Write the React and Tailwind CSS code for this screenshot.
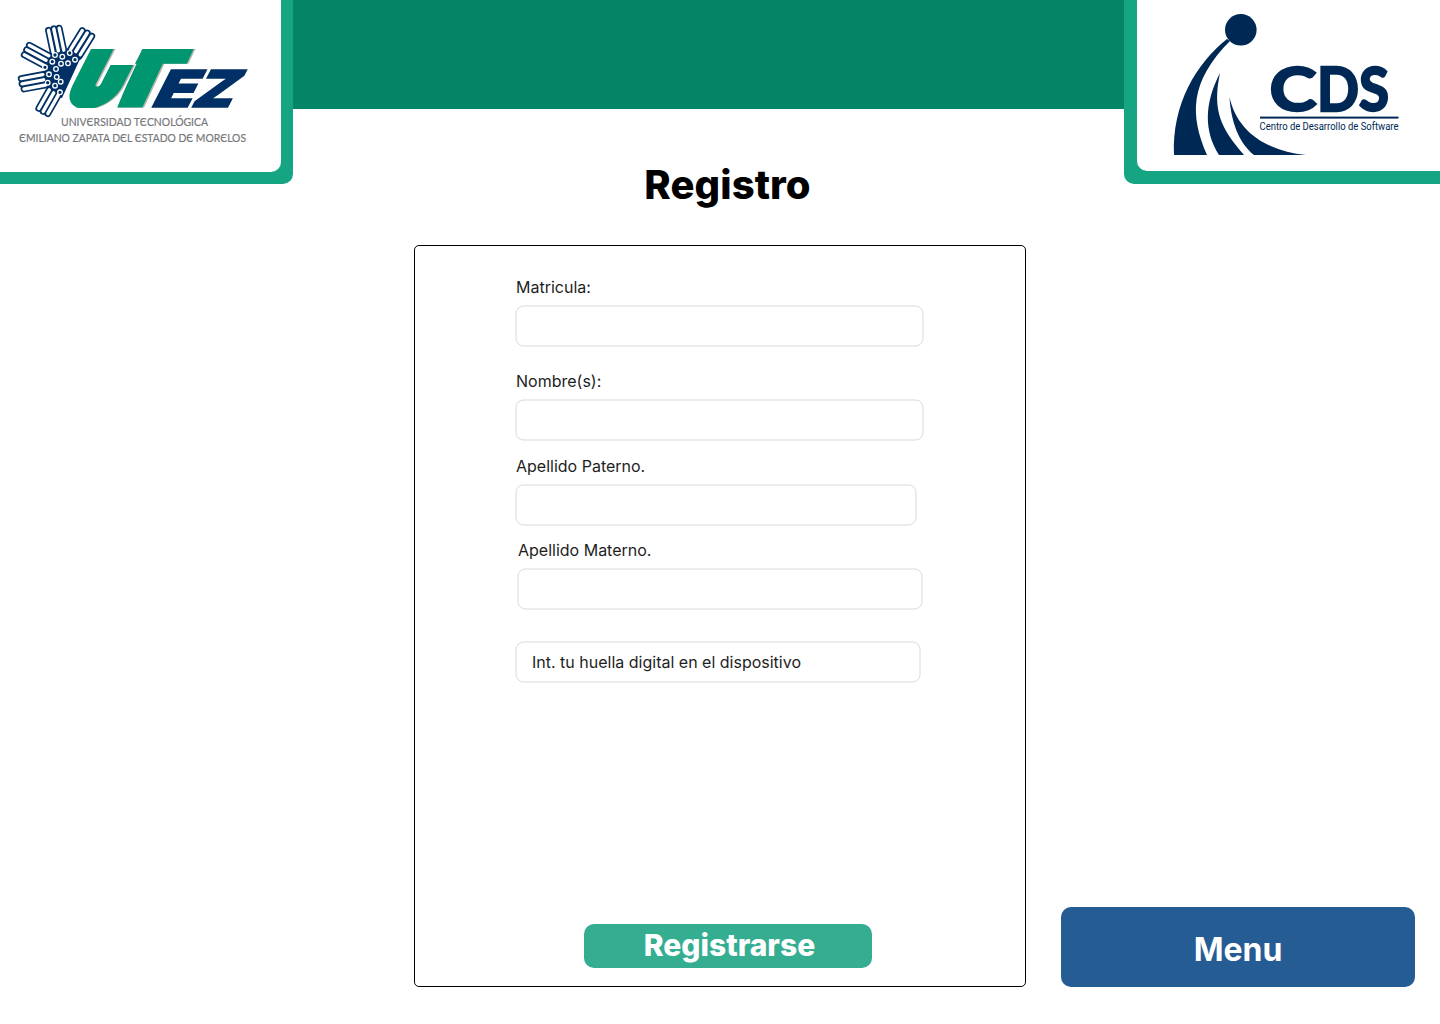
const hands = [
  { dx: 4.6, dy: 22, tips: [[48.5, 30.3], [53.8, 28.8], [59.2, 28.2]] },
  { dx: -11.5, dy: 18.5, tips: [[82.3, 30.6], [87.2, 33], [91.8, 36.2]] },
  { dx: 19.5, dy: 10.5, tips: [[29.3, 45.2], [26.6, 49.8], [24.2, 54.8]] },
  { dx: 21.5, dy: -4, tips: [[21.2, 78.6], [22, 83.8], [24, 89]] },
  { dx: 10.5, dy: -18.5, tips: [[38.8, 108.4], [43.2, 111.4], [47.8, 113.6]] },
];

const knuckles = [
  [55, 55], [62.3, 56.7], [69.7, 53], [75, 59.7], [68, 63.3], [61, 63.7], [52.3, 61.7], [45, 67.3],
  [56, 69], [49, 74.3], [56.7, 77], [47.7, 82.7], [55, 85.7], [60.7, 81.7], [60, 92.3],
];

function SlantedLetter({ ch, x, w, y, size, fill, dx = 0, stroke = 0, slant = -25 }) {
  return (
    <text
      transform={`translate(${x + dx} ${y}) skewX(${slant})`}
      fontFamily="Inter, sans-serif"
      fontWeight="900"
      fontSize={size}
      textLength={w}
      lengthAdjust="spacingAndGlyphs"
      fill={fill}
      stroke={fill}
      strokeWidth={stroke}
      strokeLinejoin="miter"
    >
      {ch}
    </text>
  );
}

function GreenLetters({ fill, dx }) {
  return (
    <>
      <g clipPath="url(#u-shape)">
        <SlantedLetter ch="U" x={65.5} w={46.5} y={102.5} size={68} fill={fill} dx={dx} stroke={10.5} slant={-27} />
      </g>
      <g clipPath="url(#t-shape)">
        <SlantedLetter ch="T" x={92} w={76} y={106} size={77} fill={fill} dx={dx} stroke={3} />
      </g>
    </>
  );
}

function UtezLogo() {
  return (
    <svg width="281" height="172" viewBox="0 0 281 172" role="img" aria-label="UTEZ">
      <defs>
        <clipPath id="u-shape"><path d="M50 49H116.5L108.5 65H150V108H50Z" /></clipPath>
        <clipPath id="t-shape"><path d="M142.5 49H200V108H117L134.5 65Z" /></clipPath>
      </defs>
      <path d="M52 54L68 54L75 56L86 46L62 98L57 97L53 92L50 85L44 82L46 74L44 66Z" fill="#003065" />
      {hands.map(({ dx, dy, tips }, h) => (
        <g key={h} strokeLinecap="round">
          {tips.map(([x, y], i) => (
            <line key={i} x1={x} y1={y} x2={x + dx * 1.1} y2={y + dy * 1.1} stroke="#003065" strokeWidth="6.8" />
          ))}
          {tips.map(([x, y], i) => (
            <line key={i} x1={x} y1={y} x2={x + dx} y2={y + dy} stroke="#fff" strokeWidth="3.4" />
          ))}
        </g>
      ))}
      {knuckles.map(([x, y], i) => (
        <circle key={i} cx={x} cy={y} r="2.3" fill="#003065" stroke="#fff" strokeWidth="1.3" />
      ))}
      <GreenLetters fill="#b9b5ad" dx={1.8} />
      <GreenLetters fill="#00966F" dx={0} />
      <SlantedLetter ch="E" x={149.5} w={40.5} y={107} size={51} fill="#003065" slant={-27} stroke={1.5} />
      <SlantedLetter ch="Z" x={189.5} w={41} y={107} size={51} fill="#003065" slant={-27} stroke={1.5} />
      <g fontFamily="Lato, sans-serif" fontSize="12" fill="#77787b" stroke="#77787b" strokeWidth="0.2">
        <text x="61" y="126" textLength="147" lengthAdjust="spacingAndGlyphs">UNIVЄRSIDAD TЄCNOLÓGICA</text>
        <text x="19" y="142" textLength="227" lengthAdjust="spacingAndGlyphs">ЄMILIANO ZAPATA DЄL ЄSTADO DЄ MORЄLOS</text>
      </g>
    </svg>
  );
}

function CdsLogo() {
  return (
    <svg width="303" height="171" viewBox="1137 0 303 171" fill="#002855" role="img" aria-label="CDS">
      <circle cx="1240.8" cy="29.8" r="15.8" />
      <path d="M1227 39C1196 64 1172 104 1174 155H1207C1190 116 1189 82 1230 41Z" />
      <path d="M1220 73C1204 104 1204 131 1219 155H1244C1221 128 1212 111 1220 73Z" />
      <path d="M1229.5 97C1231 122 1239 143 1254 155H1306C1267 151 1237 132 1229.5 97Z" />
      <g fontFamily="Lato, sans-serif" fontWeight="700" fontSize="61" stroke="#002855" strokeWidth="2.4">
        <text x="1269.5" y="111.4" textLength="47" lengthAdjust="spacingAndGlyphs">C</text>
        <text x="1317" y="111.4" textLength="42" lengthAdjust="spacingAndGlyphs">D</text>
        <text x="1359" y="111.4" textLength="30" lengthAdjust="spacingAndGlyphs">S</text>
      </g>
      <rect x="1260" y="116.6" width="138.5" height="2" />
      <text x="1259.5" y="130" fontFamily="Roboto, sans-serif" fontSize="10" textLength="139" lengthAdjust="spacingAndGlyphs">
        Centro de Desarrollo de Software
      </text>
    </svg>
  );
}

function Field({ label, className }) {
  return (
    <label className={`flex flex-col gap-1.5 ${className}`}>
      <span className="pl-px text-base leading-6">{label}</span>
      <input className="h-[41px] w-full translate-x-[0.5px] translate-y-[0.5px] rounded-lg border border-[#d9d9d9] bg-white px-4 outline-none" />
    </label>
  );
}

export default function App() {
  return (
    <div className="flex h-[1024px] w-[1440px] flex-col overflow-hidden bg-white font-['Inter',sans-serif] text-[#1e1e1e]">
      <header className="flex h-[184px] items-start justify-between">
        <div className="h-[184px] w-[293px] rounded-br-[10px] bg-[#16a582]">
          <div className="h-[172px] w-[281px] overflow-hidden rounded-br-[10px] bg-white"><UtezLogo /></div>
        </div>
        <div className="flex h-[184px] flex-1 flex-col items-center">
          <div className="h-[109px] w-full shrink-0 bg-[#068466]" />
          <h1 className="mt-[51px] ml-[38px] text-[40px] leading-[50px] font-extrabold tracking-[0.1px] whitespace-nowrap text-black">Registro</h1>
        </div>
        <div className="flex h-[184px] w-[316px] justify-end rounded-bl-[10px] bg-[#16a582]">
          <div className="h-[171px] w-[303px] overflow-hidden rounded-bl-[10px] bg-white"><CdsLogo /></div>
        </div>
      </header>
      <main className="mt-[61px] ml-[414px] flex items-end gap-[35px]">
        <form className="flex h-[742px] w-[612px] flex-col rounded-[5px] border border-black pt-[29px] pl-[100px]">
          <Field label="Matricula:" className="w-[408px]" />
          <Field label="Nombre(s):" className="mt-[23px] w-[408px]" />
          <Field label="Apellido Paterno." className="mt-3.5 w-[401px]" />
          <Field label="Apellido Materno." className="mt-[13px] ml-0.5 w-[405px]" />
          <div className="mt-8 flex h-[41px] w-[405px] translate-x-[0.5px] translate-y-[0.5px] items-center rounded-lg border border-[#d9d9d9] px-[15.5px] pb-0.5 text-base">
            Int. tu huella digital en el dispositivo
          </div>
          <button type="button" className="mt-auto mb-[18px] ml-[69px] h-11 w-[288px] rounded-[10px] bg-[#34ad90] pb-0.5 pl-[3px] text-[30px] leading-none font-extrabold text-white">
            Registrarse
          </button>
        </form>
        <button type="button" className="h-20 w-[354px] rounded-[10px] bg-[#265c94] pt-[5px] text-[32px] font-bold text-white">
          Menu
        </button>
      </main>
    </div>
  );
}
